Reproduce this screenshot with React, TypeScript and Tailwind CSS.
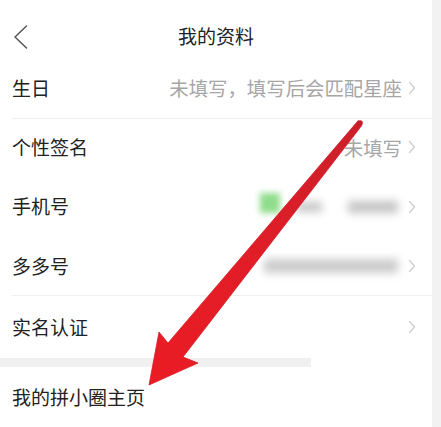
import React from "react";

const Chevron = () => (
  <svg width="8" height="14" viewBox="0 0 8 14" fill="none" className="shrink-0">
    <path d="M1.5 1.5 L6.5 7 L1.5 12.5" stroke="#cfcfcf" strokeWidth="1.4" strokeLinecap="round" strokeLinejoin="round" />
  </svg>
);

type RowProps = {
  label: string;
  h: string;
  children?: React.ReactNode;
  divider?: boolean;
};

const Row = ({ label, h, children, divider }: RowProps) => (
  <div className={`${h} pl-3 flex`}>
    <div className={`flex-1 flex items-center pr-4 ${divider ? "border-b border-[#efefef]" : ""}`}>
      <span className="text-[19px] text-[#222] flex-1">{label}</span>
      <div className="flex items-center gap-[6px]">{children}</div>
    </div>
  </div>
);

const Arrow = () => (
  <svg className="absolute inset-0 pointer-events-none" width="441" height="427" viewBox="0 0 441 427">
    <defs>
      <linearGradient id="ar" x1="360" y1="122" x2="150" y2="385" gradientUnits="userSpaceOnUse">
        <stop offset="0" stopColor="#c9202b" />
        <stop offset="0.5" stopColor="#e11d27" />
        <stop offset="1" stopColor="#ea1c24" />
      </linearGradient>
    </defs>
    <polygon
      points="358.2,120.6 168,343 159,332 149,385 198,363 183,357 361.8,125.4"
      fill="url(#ar)"
      stroke="#d51e28"
      strokeWidth="0.8"
      strokeLinejoin="round"
    />
    <circle cx="360" cy="123" r="2.8" fill="#c4202b" />
  </svg>
);

export default function App() {
  return (
    <div
      className="relative w-[441px] h-[427px] bg-white flex overflow-hidden"
      style={{ fontFamily: '"Noto Sans CJK SC", "Noto Sans", sans-serif' }}
    >
      <div className="w-[432px] flex flex-col">
        <div className="h-[58px] relative flex items-center justify-center">
          <svg className="absolute left-[13px] top-[25px]" width="15" height="24" viewBox="0 0 15 24" fill="none">
            <path d="M13.5 1 L2 12 L13.5 23" stroke="#555" strokeWidth="1.5" strokeLinecap="round" strokeLinejoin="round" />
          </svg>
          <span className="text-[19px] text-[#222] mt-[15px]">我的资料</span>
        </div>

        <Row label="生日" h="h-[61px]" divider>
          <span className="text-[19.4px] text-[#a6a6a6]">未填写，填写后会匹配星座</span>
          <Chevron />
        </Row>
        <Row label="个性签名" h="h-[57px]">
          <span className="text-[19.4px] text-[#a6a6a6]">未填写</span>
          <Chevron />
        </Row>
        <Row label="手机号" h="h-[61px]">
          <div className="w-[20px] h-[20px] bg-[#8fdc8a] blur-[3px] mr-[10px] -mt-[8px]" />
          <div className="w-[26px] h-[10px] bg-[#c6c6c6] blur-[4px] mr-[20px]" />
          <div className="w-[50px] h-[12px] bg-[#c4c4c4] blur-[4px] mr-[4px]" />
          <Chevron />
        </Row>
        <Row label="多多号" h="h-[59px]" divider>
          <div className="w-[134px] h-[14px] bg-[#cbcbcb] blur-[4px] mr-[4px]" />
          <Chevron />
        </Row>
        <Row label="实名认证" h="h-[62px]">
          <Chevron />
        </Row>

        <div className="h-[9px] flex">
          <div className="w-[311px] bg-[#f0f0f0]" />
        </div>

        <div className="h-[60px] pl-3 flex items-center">
          <span className="text-[19px] text-[#222]">我的拼小圈主页</span>
        </div>
      </div>
      <div className="flex-1 bg-[#f2f2f2]" />
      <Arrow />
    </div>
  );
}
